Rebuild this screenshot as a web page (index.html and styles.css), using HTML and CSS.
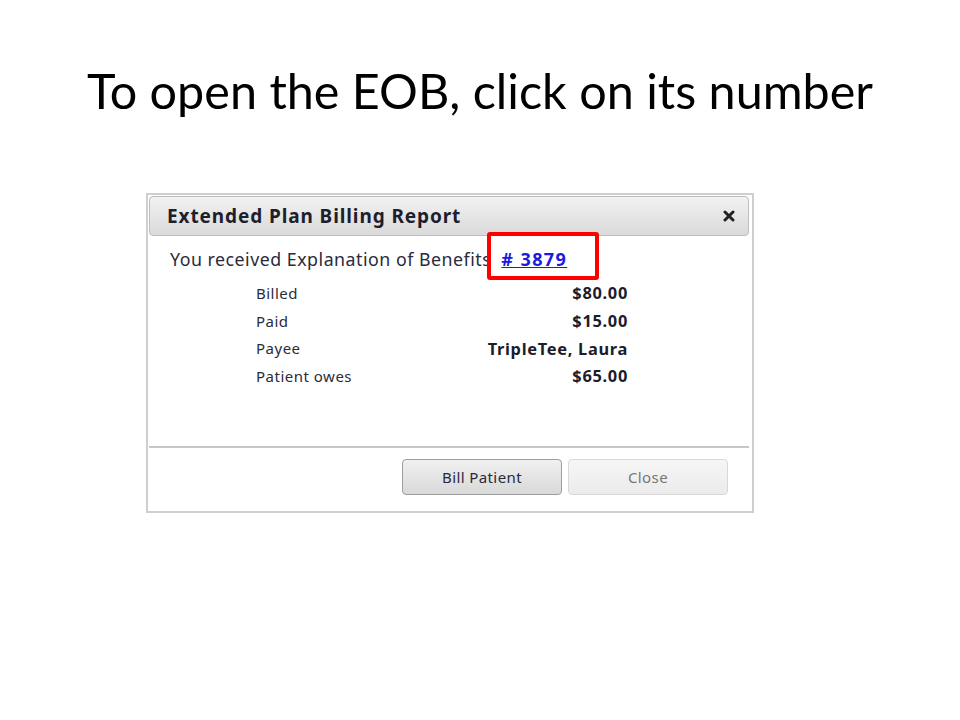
FILE: index.html
```html
<!DOCTYPE html>
<html lang="en">

<head>
    <meta charset="UTF-8">
    <meta name="viewport" content="width=device-width, initial-scale=1.0">
    <title>To open the EOB, click on its number</title>
    <link rel="stylesheet" href="styles.css">
</head>

<body>
    <main class="slide">
        <h1 class="slide-title">To open the EOB, click on its number</h1>

        <section class="dialog">
            <header class="dialog-head">
                <h2>Extended Plan Billing Report</h2>
                <span class="dialog-x">
                    <svg width="12" height="12" viewBox="0 0 12 12">
                        <path d="M2 2 L10 10 M10 2 L2 10" stroke="#222" stroke-width="3" stroke-linecap="round" />
                    </svg>
                </span>
            </header>

            <div class="dialog-body">
                <p class="eob-line">
                    You received Explanation of Benefits
                    <span class="eob-ref"><a href="#">#&nbsp;3879</a></span>
                </p>

                <table class="eob-table">
                    <tr>
                        <td>Billed</td>
                        <td class="amount">$80.00</td>
                    </tr>
                    <tr>
                        <td>Paid</td>
                        <td class="amount">$15.00</td>
                    </tr>
                    <tr>
                        <td>Payee</td>
                        <td class="amount">TripleTee, Laura</td>
                    </tr>
                    <tr>
                        <td>Patient owes</td>
                        <td class="amount">$65.00</td>
                    </tr>
                </table>
            </div>

            <footer class="dialog-foot">
                <button class="btn">Bill Patient</button>
                <button class="btn btn-light">Close</button>
            </footer>
        </section>
    </main>
</body>

</html>
```

FILE: styles.css
```css
* {
    margin: 0;
    padding: 0;
    box-sizing: border-box;
}

body {
    width: 960px;
    height: 720px;
    background-color: #fff;
    font-family: "Noto Sans", "Open Sans", sans-serif;
    color: #333;
}

.slide {
    width: 960px;
    height: 720px;
    padding-top: 62px;
}

.slide-title {
    font: 400 48.5px "Lato", "Open Sans", sans-serif;
    color: #000;
    text-align: center;
    line-height: 56px;
}

.dialog {
    width: 608px;
    height: 320px;
    margin: 75px 0 0 146px;
    border: 2px solid #cfcfcf;
    padding: 1px 3px 1px 1px;

    display: flex;
    flex-direction: column;
}

.dialog-head {
    height: 40px;
    display: flex;
    align-items: center;
    justify-content: space-between;
    padding: 0 13px 0 17px;

    border: 1px solid #bdbdbd;
    border-radius: 4px;
    background: linear-gradient(to bottom, #f2f2f2, #dadada);
}

.dialog-head h2 {
    font: 700 19px "Noto Sans", "Open Sans", sans-serif;
    letter-spacing: 0.9px;
    color: #1e1e2c;
}

.dialog-x {
    display: flex;
}

.dialog-body {
    flex: 1;
    padding: 10px 0 0 21px;
}

.eob-line {
    font-size: 17.8px;
    line-height: 26px;
    letter-spacing: 0.5px;
    color: #2a2a3a;
}

.eob-ref {
    position: relative;
    margin-left: 5px;
}

.eob-ref a {
    color: #1a1ae0;
    font-weight: 700;
    font-size: 18px;
    letter-spacing: 1.4px;
}

.eob-ref::after {
    content: "";
    box-sizing: border-box;
    position: absolute;
    left: -14px;
    top: -15px;
    width: 112px;
    height: 48px;
    border: 4px solid #ff0000;
    border-radius: 3px;
}

.eob-table {
    margin: 7px 0 0 86px;
    width: 372px;
    border-collapse: collapse;
    font-size: 15px;
    letter-spacing: 0.5px;
    color: #2b2b3b;
}

.eob-table td {
    height: 27.7px;
    padding: 0;
}

.eob-table .amount {
    text-align: right;
    font-weight: 700;
    font-size: 16.4px;
    letter-spacing: 0.7px;
    color: #1c1c2c;
}

.dialog-foot {
    height: 64px;
    border-top: 2px solid #c6c6c6;
    display: flex;
    justify-content: flex-end;
    gap: 6px;
    padding: 11px 21px 0 0;
}

.btn {
    width: 160px;
    height: 36px;
    border: 1px solid #9e9e9e;
    border-radius: 4px;
    background: linear-gradient(to bottom, #f0f0f0, #d9d9d9);
    font: 400 15px "Noto Sans", "Open Sans", sans-serif;
    letter-spacing: 0.4px;
    color: #2a2a3a;
}

.btn-light {
    border-color: #d8d8d8;
    background: linear-gradient(to bottom, #f6f6f6, #ebebeb);
    color: #777;
}
```
